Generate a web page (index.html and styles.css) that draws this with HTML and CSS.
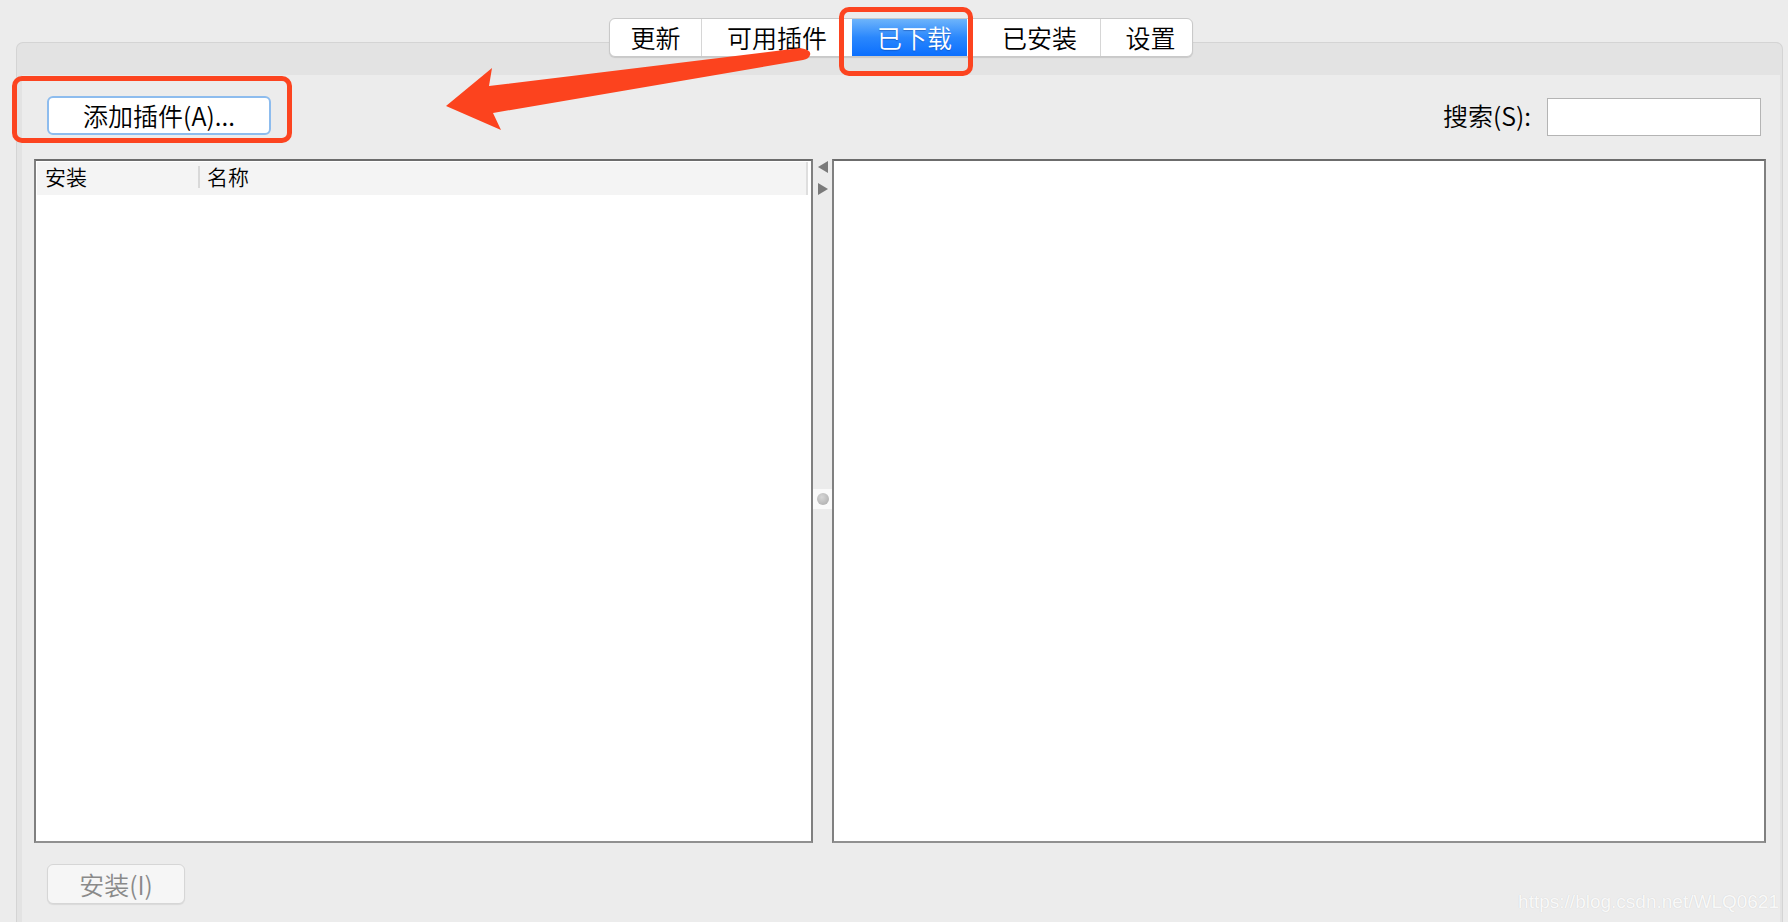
FILE: index.html
```html
<!DOCTYPE html>
<html lang="zh">
<head>
<meta charset="utf-8">
<title>插件</title>
<link rel="stylesheet" href="styles.css">
</head>
<body>
<div class="window">
  <nav class="tabs">
    <div class="tab tab-update">更新</div>
    <div class="tab tab-available">可用插件</div>
    <div class="tab tab-downloaded active">已下载</div>
    <div class="tab tab-installed">已安装</div>
    <div class="tab tab-settings">设置</div>
  </nav>
  <div class="panel">
    <div class="panel-head"></div>
    <div class="panel-body">
      <div class="toolbar">
        <button class="btn btn-add">添加插件(A)...</button>
        <div class="search">
          <label class="search-label">搜索(S):</label>
          <input class="search-input" type="text">
        </div>
      </div>
      <div class="lists">
        <div class="list list-left">
          <div class="list-header">
            <div class="col col-install">安装</div>
            <div class="col col-name">名称</div>
          </div>
        </div>
        <div class="splitter">
          <span class="arrow arrow-left"></span>
          <span class="arrow arrow-right"></span>
          <div class="knob-band"><span class="knob"></span></div>
        </div>
        <div class="list list-right"></div>
      </div>
      <div class="footer">
        <button class="btn btn-install">安装(I)</button>
      </div>
    </div>
  </div>
</div>

<div class="mark mark-tab"></div>
<div class="mark mark-add"></div>
<svg class="annot-arrow" viewBox="0 0 1788 922" width="1788" height="922">
  <path d="M446 106 L492 68 L489 86 L800 48 Q812 50 810 55 Q809 59 803 60 L493 113 L501 130 Z" fill="#fc431e"/>
</svg>
<div class="watermark">https://blog.csdn.net/WLQ0621</div>
</body>
</html>
```
FILE: styles.css
```css
* { box-sizing: border-box; }

html, body {
  margin: 0;
  padding: 0;
  width: 1788px;
  height: 922px;
  overflow: hidden;
  background: #ececec;
  font-family: "Noto Sans CJK SC", "Liberation Sans", sans-serif;
  font-weight: 350;
  color: #111;
}

.window {
  padding: 18px 5px 0 16px;
  height: 922px;
  display: flex;
  flex-direction: column;
}

/* segmented tab control */
.tabs {
  position: relative;
  z-index: 2;
  align-self: center;
  display: flex;
  height: 39px;
  margin-left: 3px;
  background: #fff;
  border: 1px solid #c9c9c9;
  border-radius: 6px;
  box-shadow: 0 1px 1px rgba(0,0,0,0.12);
  overflow: hidden;
}

.tab {
  display: flex;
  align-items: center;
  justify-content: center;
  height: 100%;
  font-size: 25px;
  line-height: 1;
  color: #000;
  border-left: 1px solid #d6d6d6;
}
.tab:first-child { border-left: none; }

.tab-update { width: 91px; }
.tab-available { width: 151px; }
.tab-downloaded { width: 115px; padding-left: 10px; }
.tab-installed { width: 133px; padding-left: 12px; border-left: none; }
.tab-settings { width: 92px; padding-left: 8px; }

.tab.active {
  color: #fff;
  background: linear-gradient(#6db4fb, #2a87fd 50%, #0b6ffe);
  text-shadow: 0 1px 1px rgba(0,40,120,0.35);
  border-left: none;
}

/* main panel */
.panel {
  margin-top: -15px;
  flex: 1;
  display: flex;
  flex-direction: column;
  background: #e3e3e3;
  border: 1px solid #d4d4d4;
  border-bottom: none;
  border-radius: 7px 7px 0 0;
}

.panel-head {
  height: 32px;
  flex: none;
}

.panel-body {
  flex: 1;
  margin: 0 2px 0 5px;
  background: #ececec;
  padding: 20px 14px 0 12px;
  display: flex;
  flex-direction: column;
}

.toolbar {
  display: flex;
  align-items: center;
  justify-content: space-between;
  height: 40px;
}

.btn {
  font-family: "Noto Sans CJK SC", "Liberation Sans", sans-serif;
  font-weight: 350;
  font-size: 25px;
  line-height: 1;
  cursor: default;
}

.btn-add {
  margin-left: 13px;
  width: 224px;
  height: 39px;
  background: #fff;
  border: 2px solid #8dbcee;
  border-radius: 6px;
  color: #000;
  padding: 0;
}

.search {
  display: flex;
  align-items: center;
  gap: 16px;
  margin-right: 5px;
}

.search-label {
  font-size: 25px;
  line-height: 1;
  color: #000;
}

.search-input {
  width: 214px;
  height: 38px;
  margin-top: 3px;
  border: 1px solid #b4b4b4;
  background: #fff;
  outline: none;
}

/* lists */
.lists {
  margin-top: 24px;
  height: 684px;
  display: flex;
}

.list {
  height: 100%;
  background: #fff;
  border: 2px solid #808080;
  border-top-color: #6c6c6c;
  border-bottom-color: #909090;
}

.list-left {
  width: 779px;
  padding: 0 3px 0 1px;
}

.list-right {
  flex: 1;
}

.list-header {
  display: flex;
  align-items: center;
  height: 33px;
  margin-top: 1px;
  background: #f4f4f4;
  border-right: 2px solid #dedede;
  font-size: 21px;
  line-height: 1;
  color: #000;
  padding-bottom: 3px;
}

.col-install {
  width: 163px;
  padding-left: 8px;
  height: 22px;
  border-right: 2px solid #d9d9d9;
}

.col-name {
  padding-left: 7px;
  height: 22px;
}

/* splitter */
.splitter {
  width: 19px;
  display: flex;
  flex-direction: column;
  align-items: center;
}

.arrow {
  width: 0;
  height: 0;
  border-top: 6px solid transparent;
  border-bottom: 6px solid transparent;
}
.arrow-left {
  margin-top: 2px;
  border-right: 10px solid #7a7a7a;
}
.arrow-right {
  margin-top: 10px;
  border-left: 10px solid #7a7a7a;
}

.knob-band {
  margin-top: 294px;
  width: 100%;
  height: 20px;
  background: #fafafa;
  display: flex;
  align-items: center;
  justify-content: center;
}

.knob {
  width: 12px;
  height: 12px;
  border-radius: 50%;
  background: radial-gradient(circle at 40% 35%, #d6d6d6, #a9a9a9);
}

/* footer */
.footer {
  margin-top: 21px;
  padding-left: 13px;
}

.btn-install {
  width: 138px;
  height: 40px;
  background: #f6f6f6;
  border: 1px solid #d6d6d6;
  border-radius: 6px;
  box-shadow: 0 1px 1px rgba(0,0,0,0.08);
  color: #8a8a8a;
  padding: 0;
}

/* annotations overlay */
.mark {
  position: absolute;
  border: 5px solid #fc4420;
  border-radius: 10px;
  z-index: 5;
}
.mark-tab {
  left: 839px;
  top: 7px;
  width: 134px;
  height: 69px;
}
.mark-add {
  left: 12px;
  top: 76px;
  width: 280px;
  height: 67px;
}

.annot-arrow {
  position: absolute;
  left: 0;
  top: 0;
  z-index: 6;
  pointer-events: none;
}

.watermark {
  position: absolute;
  right: 9px;
  bottom: 9px;
  font-family: "Liberation Sans", Arial, sans-serif;
  font-weight: 400;
  font-size: 19px;
  color: rgba(255,255,255,0.9);
  text-shadow: 0 0 1px rgba(0,0,0,0.15);
  z-index: 7;
}
```
